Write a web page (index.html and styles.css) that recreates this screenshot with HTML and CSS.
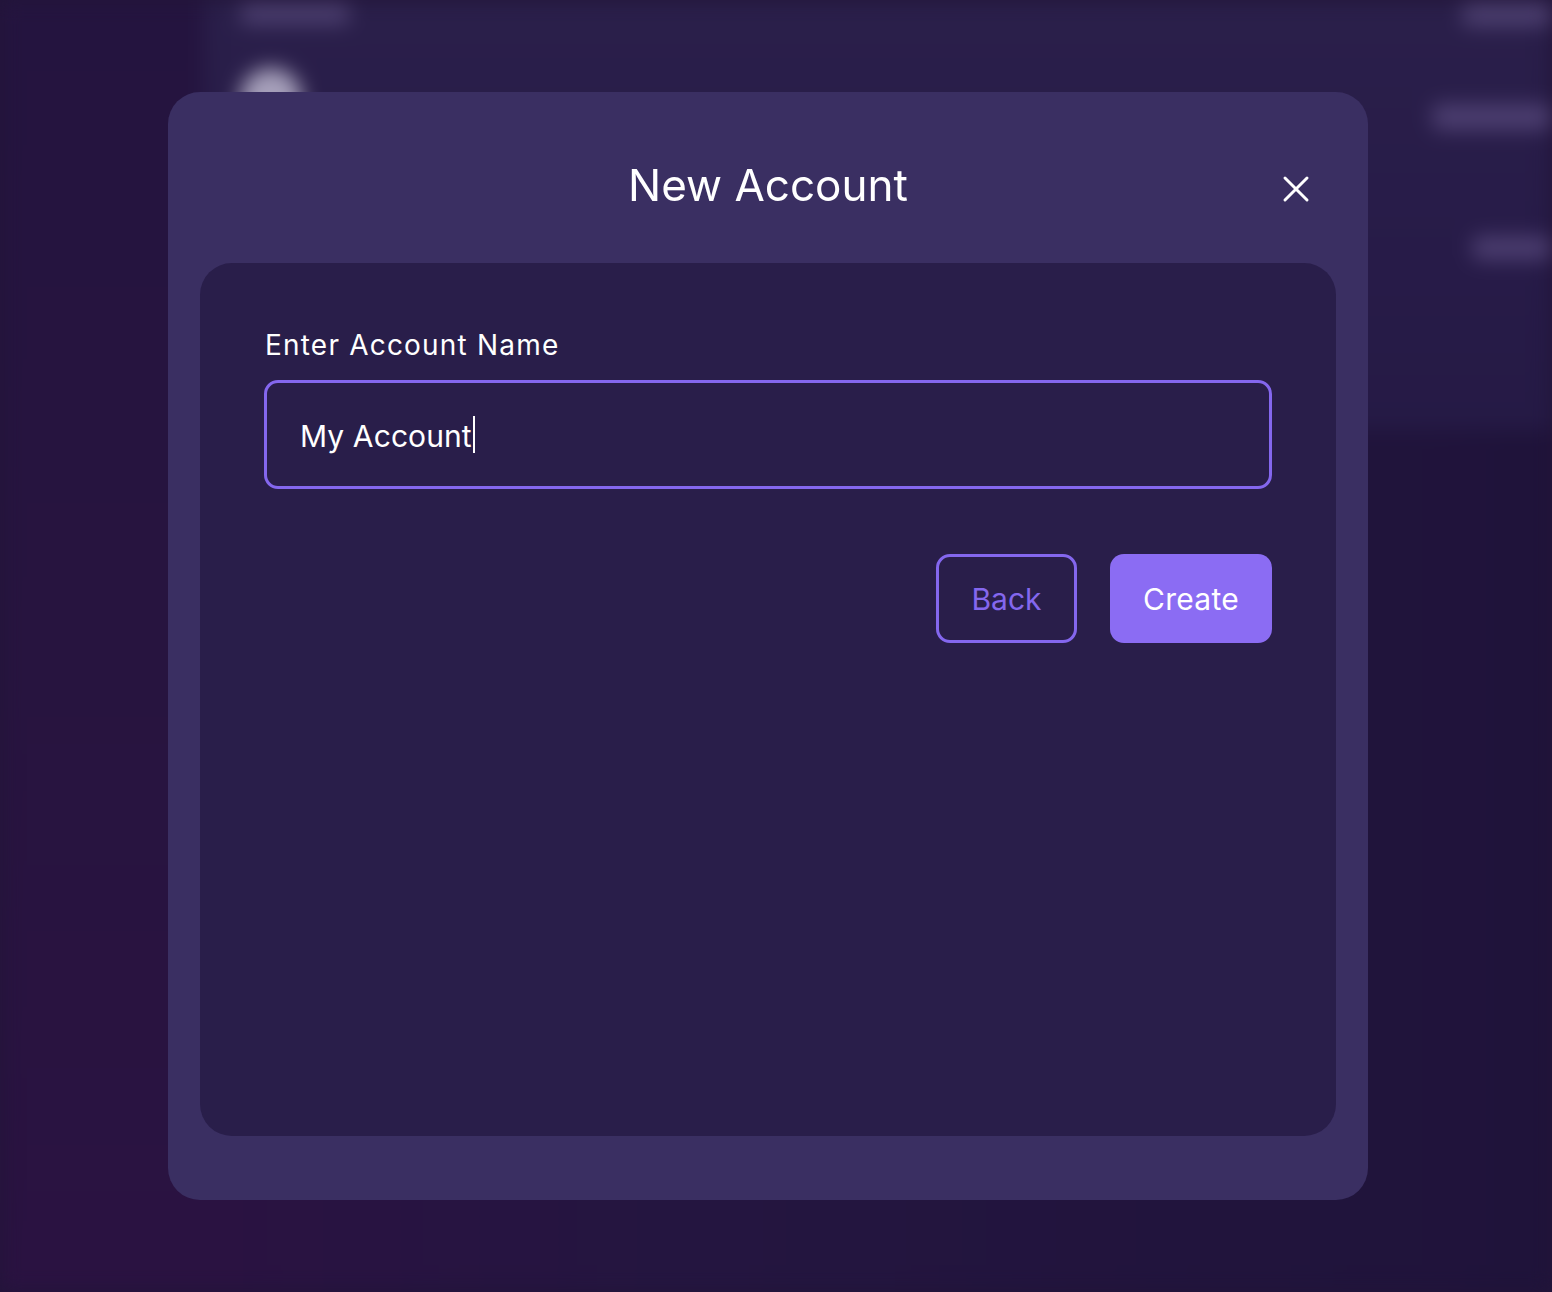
FILE: index.html
```html
<!DOCTYPE html>
<html lang="en">
<head>
<meta charset="utf-8">
<title>New Account</title>
<link rel="stylesheet" href="styles.css">
</head>
<body>
<div class="app" aria-hidden="true">
  <aside class="sidebar"></aside>
  <main class="main">
    <div class="top">
      <div class="top-left">
        <div class="blob blob-title"></div>
        <div class="avatar"></div>
      </div>
      <div class="top-right">
        <div class="blob blob-r1"></div>
        <div class="blob blob-r2"></div>
        <div class="blob blob-r3"></div>
      </div>
    </div>
    <div class="bottom"></div>
  </main>
</div>

<div class="overlay">
  <section class="modal" role="dialog" aria-labelledby="modal-title">
    <header class="modal-header">
      <h1 id="modal-title" class="modal-title">New Account</h1>
      <button class="close-btn" aria-label="Close">
        <svg width="28" height="28" viewBox="0 0 28 28" fill="none" stroke="#ffffff" stroke-width="3" stroke-linecap="round">
          <path d="M3 3 L25 25 M25 3 L3 25"/>
        </svg>
      </button>
    </header>
    <div class="panel">
      <label class="field-label">Enter Account Name</label>
      <div class="text-input"><span class="input-value">My Account</span><span class="caret"></span></div>
      <div class="actions">
        <button class="btn btn-outline">Back</button>
        <button class="btn btn-primary">Create</button>
      </div>
    </div>
  </section>
</div>
</body>
</html>
```

FILE: styles.css
```css
* { box-sizing: border-box; }

html, body {
  margin: 0;
  padding: 0;
  width: 100%;
  height: 100%;
  overflow: hidden;
}

body {
  background: #221539;
  font-family: "Inter", "Lato", "Liberation Sans", sans-serif;
  color: #ffffff;
}

/* blurred background app */
.app {
  position: fixed;
  inset: 0;
  display: flex;
  filter: blur(10px);
}

.sidebar {
  width: 204px;
  background: linear-gradient(180deg, #24143f 0%, #27143f 50%, #2a1241 100%);
}

.main {
  flex: 1;
  display: flex;
  flex-direction: column;
  background: linear-gradient(90deg, #291540 0%, #221539 40%, #1f133a 100%);
}

.top {
  height: 430px;
  display: flex;
  justify-content: space-between;
  background: linear-gradient(180deg, #2a1f4a 0%, #271b48 60%, #251a45 100%);
}

.top-left {
  padding: 4px 0 0 36px;
  display: flex;
  flex-direction: column;
  gap: 44px;
}

.blob {
  background: rgba(120, 105, 160, 0.45);
  border-radius: 8px;
}

.blob-title {
  width: 110px;
  height: 20px;
}

.avatar {
  width: 62px;
  height: 62px;
  border-radius: 50%;
  background: rgba(220, 215, 235, 0.7);
}

.top-right {
  display: flex;
  flex-direction: column;
  align-items: flex-end;
  padding-top: 4px;
  gap: 78px;
}

.blob-r1 { width: 90px; height: 22px; }
.blob-r2 { width: 120px; height: 26px; }
.blob-r3 { width: 80px; height: 24px; margin-top: 28px; }

.bottom {
  flex: 1;
  background: linear-gradient(90deg, #2a1241 0%, #241540 35%, #1f133a 100%);
}

/* overlay + modal */
.overlay {
  position: fixed;
  top: 0;
  left: 0;
  right: 16px;
  bottom: 0;
  display: flex;
  align-items: center;
  justify-content: center;
}

.modal {
  width: 1200px;
  height: 1108px;
  background: #3a2f62;
  border-radius: 32px;
  padding: 0 32px 64px;
  display: flex;
  flex-direction: column;
}

.modal-header {
  height: 171px;
  position: relative;
  display: flex;
  justify-content: center;
  padding-top: 65px;
}

.modal-title {
  margin: 0;
  font-size: 44px;
  line-height: 56px;
  font-weight: 400;
  letter-spacing: 0;
}

.close-btn {
  position: absolute;
  top: 83px;
  right: 26px;
  width: 28px;
  height: 28px;
  padding: 0;
  border: 0;
  background: transparent;
  display: flex;
}

.panel {
  flex: 1;
  background: #291e4a;
  border-radius: 32px;
  padding: 64px 64px;
  display: flex;
  flex-direction: column;
}

.field-label {
  display: block;
  font-size: 28px;
  line-height: 36px;
  letter-spacing: 1.2px;
  color: #ffffff;
  padding-left: 1px;
}

.text-input {
  margin-top: 17px;
  height: 109px;
  border: 3px solid #8467ee;
  border-radius: 14px;
  padding: 0 33px;
  display: flex;
  align-items: center;
  font-size: 30px;
  letter-spacing: 0.1px;
}

.input-value {
  color: #ffffff;
  margin-top: 2px;
}

.caret {
  width: 2px;
  height: 37px;
  background: #ffffff;
  margin-left: 1px;
}

.actions {
  margin-top: 65px;
  display: flex;
  justify-content: flex-end;
  gap: 33px;
}

.btn {
  height: 89px;
  border-radius: 14px;
  font-family: inherit;
  font-size: 30px;
  padding: 0;
  display: flex;
  align-items: center;
  justify-content: center;
}

.btn-outline {
  width: 141px;
  background: transparent;
  border: 3px solid #8467ee;
  color: #8467ee;
}

.btn-primary {
  width: 162px;
  background: #8b6cf3;
  border: 0;
  color: #ffffff;
  letter-spacing: 0.3px;
}
```
